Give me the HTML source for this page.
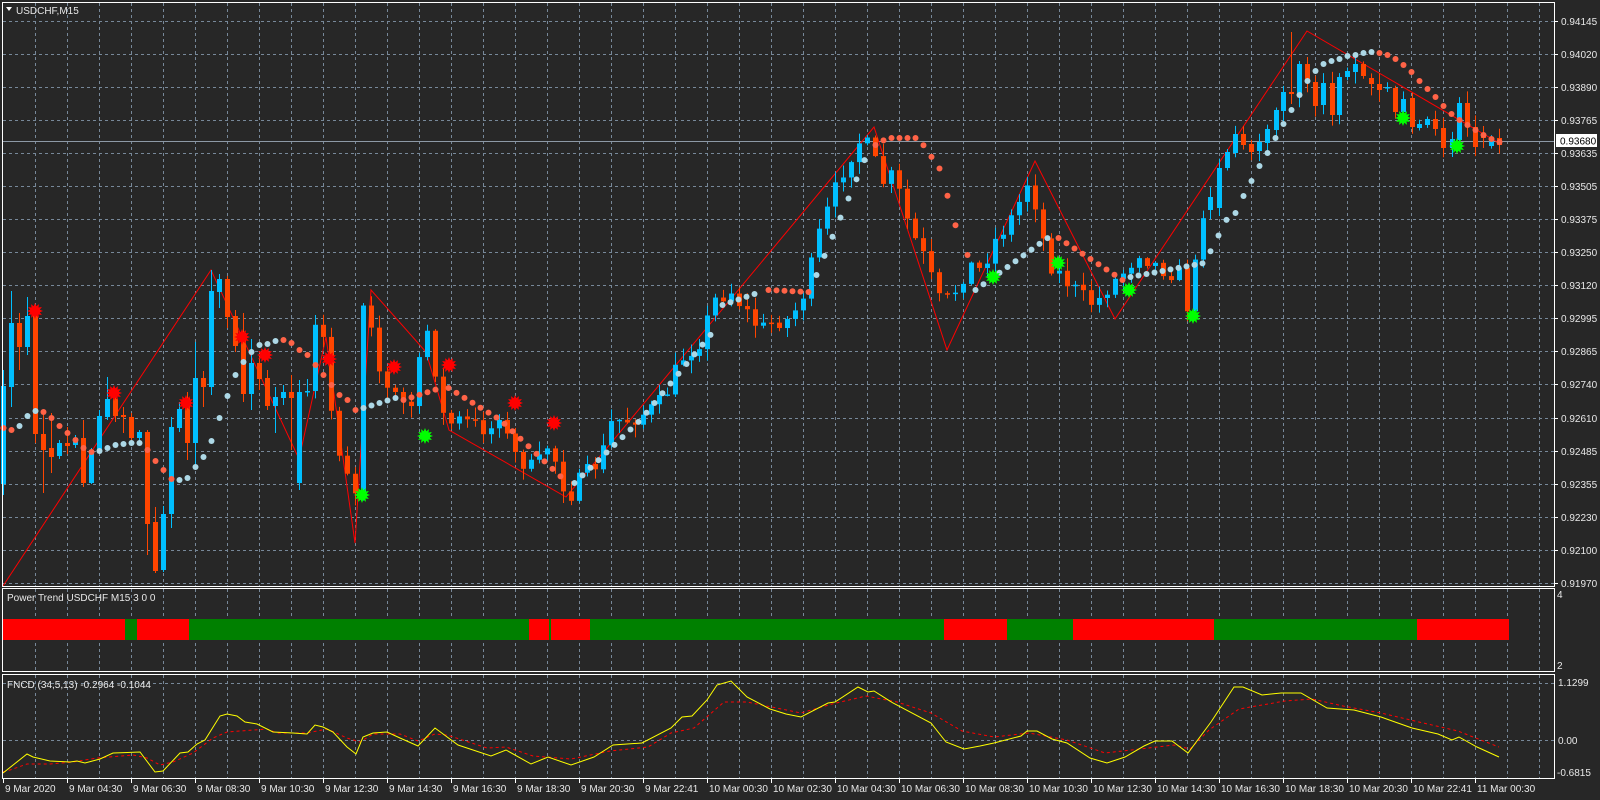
<!DOCTYPE html>
<html><head><meta charset="utf-8"><style>
html,body{margin:0;padding:0;background:#272727;width:1600px;height:800px;overflow:hidden}
svg{display:block}
text{font-family:"Liberation Sans",sans-serif;font-size:10px;fill:#e8e8e8}
</style></head><body>
<svg id="s" width="1600" height="800" xmlns="http://www.w3.org/2000/svg"></svg>
<script>
var S=[];
function L(x1,y1,x2,y2,c,w,d){S.push('<line x1="'+x1+'" y1="'+y1+'" x2="'+x2+'" y2="'+y2+'" stroke="'+c+'" stroke-width="'+(w||1)+'"'+(d?' stroke-dasharray="'+d+'"':'')+'/>');}
function R(x,y,w,h,c){S.push('<rect x="'+x+'" y="'+y+'" width="'+w+'" height="'+h+'" fill="'+c+'"/>');}
function T(x,y,t,a,extra){S.push('<text x="'+x+'" y="'+y+'"'+(a?' text-anchor="'+a+'"':'')+(extra||'')+'>'+t+'</text>');}
var G='#778899',DA='3 3';
R(0,0,1600,800,'#272727');
for(var i=0;i<18;i++){var y=Math.round(20.5+33.09*i)+0.5;L(3,y,1554,y,G,1,DA);}
for(var x=35;x<1554;x+=32){L(x+0.5,3,x+0.5,586,G,1,DA);L(x+0.5,589,x+0.5,672,G,1,DA);L(x+0.5,675,x+0.5,779,G,1,DA);}
L(3,683.5,1554,683.5,G,1,DA);L(3,740.5,1554,740.5,G,1,DA);
var seg=[[3,125,'#ff0000'],[125,137,'#008000'],[137,189,'#ff0000'],[189,529,'#008000'],[529,549,'#ff0000'],[549,551,'#008000'],[551,590,'#ff0000'],[590,944,'#008000'],[944,1007,'#ff0000'],[1007,1073,'#008000'],[1073,1214,'#ff0000'],[1214,1417,'#008000'],[1417,1509,'#ff0000']];
seg.forEach(function(s){R(s[0],619,s[1]-s[0],21,s[2]);});
var seed=7;function rnd(){seed=(seed*16807)%2147483647;return seed/2147483647;}
var C=[];
var H=[[3,386,484,'b',370,495],[11,323,387,'b',291,407],[19,323,347,'o',313,370],[27,316,347,'b',297,355],[35,313,434,'o',305,443],[43,434,450,'o',410,493],[51,448,457,'o',413,473],[59,443,456,'b',440,459],[67,443,446,'o',427,454],[75,438,445,'b',435,448],[83,438,483,'o',420,487],[91,450,483,'b',448,484],[99,416,450,'b',410,452],[107,399,417,'b',377,420],[115,399,416,'o',395,422],[123,415,417,'o',407,433],[131,417,438,'o',413,441],[139,432,438,'b',430,444],[147,432,524,'o',430,555],[155,522,571,'o',507,573],[163,514,570,'b',506,572],[171,427,514,'b',417,528],[179,409,428,'b',402,432],[187,398,443,'o',392,460],[195,378,443,'b',342,467],[203,378,387,'o',371,407],[211,291,387,'b',270,395],[219,279,292,'b',274,308],[227,279,317,'o',276,328],[235,316,346,'o',310,352],[243,333,394,'o',313,402],[251,363,394,'b',339,410],[259,363,379,'o',355,390],[267,378,406,'o',370,410],[275,397,406,'b',387,433],[283,392,398,'b',385,405],[291,392,398,'o',375,450],[299,392,483,'b',380,490]];
H.forEach(function(h){C.push({x:h[0],o:h[3]=='b'?h[2]:h[1],c:h[3]=='b'?h[1]:h[2],h:h[4],l:h[5]});});
var KP=[[299,392],[307,400],[315,330],[323,340],[331,410],[339,450],[347,470],[355,490],[363,300],[371,320],[379,370],[387,390],[395,395],[410,410],[420,360],[430,318],[438,400],[446,425],[460,420],[475,425],[490,430],[500,410],[510,450],[520,460],[535,470],[550,440],[560,480],[570,495],[580,480],[600,460],[612,420],[630,420],[650,410],[663,400],[680,360],[700,340],[714,300],[730,290],[745,310],[760,330],[775,320],[790,320],[805,290],[820,230],[835,190],[847,160],[860,140],[872,150],[880,185],[890,175],[898,190],[910,230],[925,260],[938,300],[950,300],[960,280],[969,265],[980,270],[995,240],[1010,220],[1020,200],[1030,175],[1040,230],[1051,265],[1065,280],[1081,296],[1095,305],[1105,290],[1115,280],[1125,270],[1140,250],[1150,262],[1165,270],[1180,275],[1188,310],[1196,260],[1203,210]];
function interp(P,x){for(var i=0;i<P.length-1;i++){if(x>=P[i][0]&&x<=P[i+1][0]){var t=(x-P[i][0])/(P[i+1][0]-P[i][0]);return P[i][1]+t*(P[i+1][1]-P[i][1]);}}return P[P.length-1][1];}
var prev=392;
for(var x=307;x<=1203;x+=8){var c=interp(KP,x)+(rnd()-0.5)*18;var o=prev;var t=Math.min(o,c),b=Math.max(o,c);C.push({x:x,o:o,c:c,h:t-rnd()*12-1,l:b+rnd()*12+1});prev=c;}
var E=[[1210,197,210,'b'],[1219,168,208,'b'],[1227,152,168,'b'],[1235,134,153,'b'],[1243,134,145,'o'],[1251,144,152,'o'],[1259,142,151,'b'],[1267,129,143,'b'],[1276,110,130,'b'],[1283,92,111,'b'],[1291,92,94,'o'],[1299,64,96,'b'],[1307,64,82,'o'],[1315,82,106,'o'],[1323,83,105,'b'],[1332,83,115,'o'],[1339,77,115,'b'],[1347,71,77,'b'],[1355,64,72,'b'],[1363,64,76,'o'],[1371,78,84,'o'],[1379,84,90,'o'],[1387,87,88,'b'],[1395,88,112,'o'],[1403,99,112,'b'],[1412,98,127,'o'],[1419,124,128,'b'],[1427,119,125,'b'],[1435,119,129,'o'],[1443,128,148,'o'],[1452,139,148,'b'],[1459,103,140,'b'],[1467,103,127,'o'],[1475,127,147,'o'],[1483,134,138,'o'],[1491,139,146,'b'],[1499,138,145,'o']];
E.forEach(function(h){C.push({x:h[0],o:h[3]=='b'?h[2]:h[1],c:h[3]=='b'?h[1]:h[2],h:h[1]-2-rnd()*10,l:h[2]+2+rnd()*10});});
C[C.length-37+10].h=32;
L(3,141.5,1554,141.5,'#8d99a6',1);
var ZZ=[[3,586],[211,270],[299,459],[326,337],[355,543],[371,290],[426,352],[449,430],[566,497],[874,127],[947,350],[1035,161],[1115,319],[1307,31],[1499,143]];
S.push('<polyline fill="none" stroke="#ff0000" stroke-width="1" points="'+ZZ.map(function(p){return p.join(',')}).join(' ')+'"/>');
C.forEach(function(k){var col=k.c<k.o?'#00bfff':'#ff4500';var t=Math.min(k.o,k.c),b=Math.max(k.o,k.c);
L(k.x+0.5,k.h,k.x+0.5,k.l,col,1);R(k.x-2,t,5,Math.max(b-t,1.5),col);});
var LB='#add8e6',SA='#ff6347';
function dot(x,y,c){S.push('<circle cx="'+(x+0.5)+'" cy="'+y+'" r="3" fill="'+c+'"/>');}
var D1=[[3,428,'s'],[11,430,'s'],[19,426,'b'],[27,416,'b'],[35,411,'b'],[43,412,'s'],[51,418,'s'],[59,426,'s'],[67,433,'s'],[75,440,'s'],[83,448,'s'],[91,452,'s'],[99,451,'b'],[107,448,'b'],[115,445,'b'],[123,444,'b'],[131,443,'b'],[139,443,'b'],[147,450,'s'],[155,461,'s'],[163,470,'s'],[171,479,'s'],[179,480,'b'],[187,478,'b'],[195,467,'b'],[203,457,'b'],[211,441,'b'],[219,418,'b'],[227,396,'b'],[235,375,'b'],[243,362,'b'],[251,352,'b'],[259,345,'b'],[267,344,'b'],[275,341,'b'],[283,340,'s'],[291,343,'s'],[299,350,'s']];
D1.forEach(function(d){dot(d[0],d[1],d[2]=='b'?LB:SA);});
var MS=[[307,339,[[307,355],[339,395]],SA],[347,355,[[347,400],[355,410]],SA],[363,395,[[363,408],[395,398]],LB],[403,440,[[403,400],[440,388]],SA],[448,566,[[448,388],[500,420],[566,482]],SA],[574,714,[[574,483],[640,420],[714,330]],LB],[722,760,[[722,305],[760,292]],LB],[768,808,[[768,290],[808,292]],SA],[816,867,[[816,275],[867,153]],LB],[875,959,[[875,145],[887,138],[918,138],[940,170],[959,240]],SA],[967,967,[[967,255]],SA],[975,1050,[[975,290],[1050,236]],LB],[1058,1122,[[1058,238],[1122,280]],SA],[1130,1230,[[1130,277],[1204,263],[1230,212]],LB]];
MS.forEach(function(m){for(var x=m[0];x<=m[1];x+=8){dot(x,m[2].length>1?interp(m[2],x):m[2][0][1],m[3]);}});
var D2=[[1235,213,'b'],[1243,196,'b'],[1251,181,'b'],[1259,166,'b'],[1267,153,'b'],[1275,138,'b'],[1283,124,'b'],[1291,110,'b'],[1299,95,'b'],[1307,81,'b'],[1315,71,'b'],[1323,64,'b'],[1331,61,'b'],[1339,59,'b'],[1347,56,'b'],[1355,55,'b'],[1363,53,'b'],[1371,52,'b'],[1379,53,'s'],[1387,55,'s'],[1395,59,'s'],[1403,65,'s'],[1411,72,'s'],[1419,81,'s'],[1427,89,'s'],[1435,97,'s'],[1443,106,'s'],[1451,114,'s'],[1459,120,'s'],[1467,125,'s'],[1475,130,'s'],[1483,135,'s'],[1491,139,'s'],[1499,142,'s']];
D2.forEach(function(d){dot(d[0],d[1],d[2]=='b'?LB:SA);});
function star(cx,cy,col){var p=[];for(var i=0;i<24;i++){var r=i%2?5:8;var a=i*Math.PI/12;p.push((cx+r*Math.cos(a)).toFixed(1)+','+(cy+r*Math.sin(a)).toFixed(1));}S.push('<polygon points="'+p.join(' ')+'" fill="'+col+'"/>');}
[[35,311],[114,393],[186,403],[242,337],[265,355],[329,359],[394,367],[449,365],[515,403],[554,423]].forEach(function(p){star(p[0],p[1],'#ff0000');});
[[362,495],[425,436],[993,277],[1058,263],[1129,290],[1193,316],[1403,118],[1457,146]].forEach(function(p){star(p[0],p[1],'#00ff00');});
var Y=[[3,773],[27,754],[33,757],[50,761],[70,762],[77,761],[85,763],[100,759],[113,753],[140,752],[155,772],[163,771],[180,753],[188,752],[197,744],[205,740],[220,716],[227,714],[237,716],[245,722],[257,724],[273,732],[293,733],[307,734],[315,725],[323,727],[333,732],[347,747],[356,754],[363,737],[373,733],[387,732],[400,738],[418,746],[435,728],[458,745],[491,756],[506,750],[531,764],[548,757],[571,765],[594,757],[613,745],[642,743],[671,728],[682,717],[692,716],[707,700],[717,685],[731,681],[747,697],[770,709],[786,714],[801,717],[828,703],[835,702],[858,687],[868,692],[874,691],[893,703],[931,723],[946,742],[964,749],[980,746],[994,743],[1021,736],[1027,731],[1037,731],[1052,739],[1067,743],[1090,758],[1107,763],[1125,757],[1144,746],[1155,741],[1172,741],[1188,753],[1211,722],[1234,687],[1243,687],[1262,695],[1281,693],[1301,693],[1327,708],[1354,710],[1381,717],[1412,728],[1438,734],[1452,740],[1459,737],[1477,747],[1499,757]];
var Rd=[[3,772],[10,770],[27,764],[50,764],[73,762],[97,758],[133,755],[147,758],[160,765],[173,762],[193,753],[213,738],[227,732],[267,729],[277,733],[307,733],[327,729],[347,738],[360,742],[373,734],[400,734],[418,741],[435,734],[447,735],[487,748],[506,747],[533,756],[571,759],[610,751],[648,747],[671,733],[694,728],[709,715],[724,702],[747,702],[801,713],[832,704],[866,696],[897,702],[931,713],[962,731],[994,737],[1029,733],[1067,740],[1105,753],[1140,749],[1174,745],[1190,749],[1209,730],[1239,709],[1285,701],[1312,699],[1343,706],[1381,713],[1419,722],[1458,731],[1473,737],[1499,747]];
S.push('<polyline fill="none" stroke="#ff0000" stroke-width="1" stroke-dasharray="3 3" points="'+Rd.map(function(p){return p.join(',')}).join(' ')+'"/>');
S.push('<polyline fill="none" stroke="#ffff00" stroke-width="1" points="'+Y.map(function(p){return p.join(',')}).join(' ')+'"/>');
S.push('<rect x="2.5" y="2.5" width="1552" height="584" fill="none" stroke="#fff"/>');
S.push('<rect x="2.5" y="588.5" width="1552" height="83" fill="none" stroke="#fff"/>');
S.push('<rect x="2.5" y="674.5" width="1552" height="104" fill="none" stroke="#fff"/>');
var P=['0.94145','0.94020','0.93890','0.93765','0.93635','0.93505','0.93375','0.93250','0.93120','0.92995','0.92865','0.92740','0.92610','0.92485','0.92355','0.92230','0.92100','0.91970'];
P.forEach(function(p,i){var y=Math.round(20.5+33.09*i);L(1555,y+0.5,1558,y+0.5,'#fff');T(1561,y+4,p);});
R(1556,134,41,13,'#ffffff');S.push('<text x="1560" y="144.5" style="fill:#000">0.93680</text>');
T(1557,598,'4');T(1557,669,'2');
T(1558,686,'1.1299');T(1558,744,'0.00');T(1557,776,'-0.6815');
S.push('<polygon points="6,7 12,7 9,11" fill="#fff"/>');
T(16,14,'USDCHF,M15');
T(7,601,'Power Trend USDCHF M15 3 0 0');
T(7,688,'FNCD (34,5,13) -0.2964 -0.1044');
var TL=['9 Mar 2020','9 Mar 04:30','9 Mar 06:30','9 Mar 08:30','9 Mar 10:30','9 Mar 12:30','9 Mar 14:30','9 Mar 16:30','9 Mar 18:30','9 Mar 20:30','9 Mar 22:41','10 Mar 00:30','10 Mar 02:30','10 Mar 04:30','10 Mar 06:30','10 Mar 08:30','10 Mar 10:30','10 Mar 12:30','10 Mar 14:30','10 Mar 16:30','10 Mar 18:30','10 Mar 20:30','10 Mar 22:41','11 Mar 00:30'];
TL.forEach(function(t,i){var x=3+64*i;L(x+0.5,779,x+0.5,783,'#fff');T(x+2,792,t);});
document.getElementById('s').innerHTML=S.join('');
</script>
</body></html>
